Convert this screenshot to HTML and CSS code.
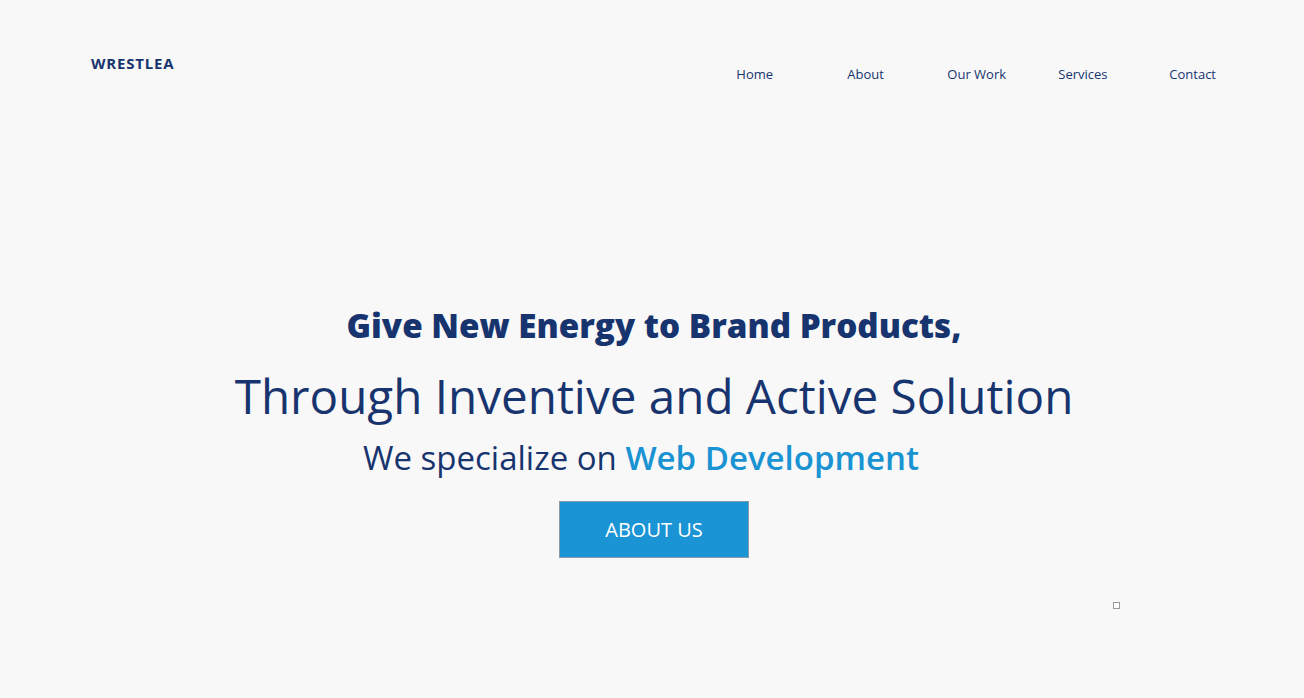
FILE: index.html
```html
<!DOCTYPE html>
<html lang="en">
<head>
<meta charset="utf-8">
<title>Wrestlea</title>
<link rel="stylesheet" href="styles.css">
</head>
<body>
<header class="header">
  <div class="logo">WRESTLEA</div>
  <nav class="nav">
    <a href="#">Home</a>
    <a href="#">About</a>
    <a href="#">Our Work</a>
    <a href="#">Services</a>
    <a href="#">Contact</a>
  </nav>
</header>
<section class="hero">
  <h1 class="hero-title">Give New Energy to Brand Products,</h1>
  <h2 class="hero-sub">Through Inventive and Active Solution</h2>
  <p class="hero-text">We specialize on <span class="accent">Web Development</span></p>
  <a class="btn" href="#">ABOUT US</a>
</section>
<span class="marker"></span>
</body>
</html>
```
FILE: styles.css
```css
* { box-sizing: border-box; }
html, body { margin: 0; padding: 0; }
body {
  position: relative;
  background: #f8f8f8;
  font-family: "Open Sans", "Noto Sans", sans-serif;
  color: #17346f;
  height: 698px;
  overflow: hidden;
}
.header {
  display: flex;
  justify-content: space-between;
  align-items: flex-start;
  padding: 53px 87px 0 91px;
}
.logo {
  font-size: 15px;
  font-weight: 700;
  letter-spacing: 0.8px;
  line-height: 20px;
}
.nav {
  display: grid;
  grid-template-columns: 111px 100px 111px 111px auto;
  padding-top: 11px;
  margin-right: 1px;
}
.nav a {
  color: #17346f;
  text-decoration: none;
  font-size: 13px;
  font-weight: 500;
  line-height: 20px;
}
.hero {
  display: flex;
  flex-direction: column;
  align-items: center;
  padding-top: 220px;
  padding-left: 4px;
}
.hero-title {
  margin: 0;
  font-size: 33.2px;
  font-weight: 800;
  line-height: 44px;
}
.hero-sub {
  margin: 17px 0 0;
  font-size: 47.6px;
  font-weight: 500;
  line-height: 62px;
}
.hero-text {
  margin: 6px 0 0;
  font-size: 33px;
  font-weight: 400;
  line-height: 50px;
  padding-right: 26px;
}
.accent {
  color: #1a93d3;
  font-weight: 600;
}
.btn {
  margin-top: 18px;
  width: 190px;
  height: 57px;
  display: flex;
  align-items: center;
  justify-content: center;
  background: #1a94d4;
  border: 1px solid #8a9aa8;
  color: #fff;
  text-decoration: none;
  font-size: 20px;
}
.marker {
  position: absolute;
  left: 1113px;
  top: 602px;
  width: 7px;
  height: 7px;
  border: 1px solid #999;
  background: #fff;
}
```
